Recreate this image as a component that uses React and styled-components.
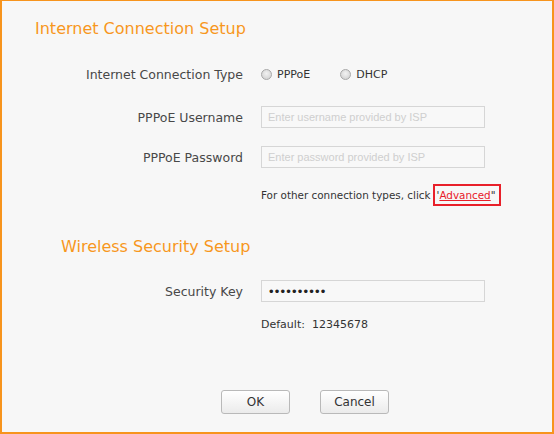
import React from "react";
import styled, { createGlobalStyle } from "styled-components";

const GlobalStyle = createGlobalStyle`
  html, body {
    margin: 0;
    padding: 0;
    background: #f7f7f7;
  }
  * { box-sizing: border-box; }
`;

const Frame = styled.div`
  width: 554px;
  height: 434px;
  background: #f7f7f7;
  border: 2px solid #f7941d;
  border-top-width: 1px;
  font-family: "DejaVu Sans", Verdana, sans-serif;
  color: #3a3a3a;
  display: flex;
  flex-direction: column;
`;

const SectionTitle = styled.h2`
  margin: ${(p) => p.$top}px 0 0 ${(p) => p.$left}px;
  font-size: 16px;
  font-weight: normal;
  line-height: 20px;
  color: #f7971e;
`;

const Row = styled.div`
  display: grid;
  grid-template-columns: 241px 1fr;
  column-gap: 18px;
  align-items: center;
  height: ${(p) => p.$h || 22}px;
  margin-top: ${(p) => p.$top}px;
`;

const Label = styled.label`
  text-align: right;
  font-size: 12.5px;
  color: #484848;
  white-space: nowrap;
`;

const Radios = styled.div`
  display: flex;
  align-items: center;
  gap: 30px;
`;

const RadioItem = styled.span`
  display: flex;
  align-items: center;
  gap: 5px;
  font-size: 11px;
  color: #333;
`;

const RadioDot = styled.span`
  width: 11px;
  height: 11px;
  border-radius: 50%;
  border: 1px solid #a8a8a8;
  background: radial-gradient(circle at 50% 40%, #f2f2f2 0%, #d4d4d4 80%);
`;

const Field = styled.input`
  width: 224px;
  height: 22px;
  border: 1px solid #d6d6d6;
  background: #f8f8f8;
  padding: 0 6px;
  font-family: "Liberation Sans", Arial, sans-serif;
  font-size: 11px;
  color: #222;
  outline: none;
  &::placeholder {
    color: #cfcfcf;
  }
`;

const Dots = styled(Field)`
  font-size: 13px;
  letter-spacing: 1.2px;
  padding-left: 7px;
`;

const Note = styled.div`
  font-size: ${(p) => p.$size || 11}px;
  color: #333;
  white-space: nowrap;
  display: flex;
  align-items: center;
`;

const AdvancedBox = styled.span`
  display: inline-flex;
  align-items: center;
  height: 22px;
  border: 2px solid #e8202a;
  padding: 0 3px 0 2px;
  margin-left: 2px;
`;

const AdvancedLink = styled.a`
  color: #e8202a;
  text-decoration: underline;
`;

const Buttons = styled.div`
  display: flex;
  gap: 30px;
  margin-top: auto;
  margin-bottom: 18px;
  padding-left: 219px;
`;

const Button = styled.button`
  width: 69px;
  height: 24px;
  border: 1px solid #b9b9b9;
  border-radius: 3px;
  background: linear-gradient(#ffffff, #ebebeb);
  font-family: "DejaVu Sans", Verdana, sans-serif;
  font-size: 12px;
  color: #333;
`;

export default function App() {
  return (
    <>
      <GlobalStyle />
      <Frame>
        <SectionTitle $top={18} $left={33}>Internet Connection Setup</SectionTitle>

        <Row $top={24}>
          <Label>Internet Connection Type</Label>
          <Radios>
            <RadioItem>
              <RadioDot />
              PPPoE
            </RadioItem>
            <RadioItem>
              <RadioDot />
              DHCP
            </RadioItem>
          </Radios>
        </Row>

        <Row $top={21}>
          <Label>PPPoE Username</Label>
          <Field placeholder="Enter username provided by ISP" />
        </Row>

        <Row $top={18}>
          <Label>PPPoE Password</Label>
          <Field placeholder="Enter password provided by ISP" />
        </Row>

        <Row $top={16}>
          <span />
          <Note $size={10.4}>
            For other connection types, click
            <AdvancedBox>
              '<AdvancedLink href="#">Advanced</AdvancedLink>"
            </AdvancedBox>
          </Note>
        </Row>

        <SectionTitle $top={31} $left={59}>Wireless Security Setup</SectionTitle>

        <Row $top={23}>
          <Label>Security Key</Label>
          <Dots type="password" defaultValue="1234567890" />
        </Row>

        <Row $top={11}>
          <span />
          <Note>Default:&nbsp; 12345678</Note>
        </Row>

        <Buttons>
          <Button>OK</Button>
          <Button>Cancel</Button>
        </Buttons>
      </Frame>
    </>
  );
}
